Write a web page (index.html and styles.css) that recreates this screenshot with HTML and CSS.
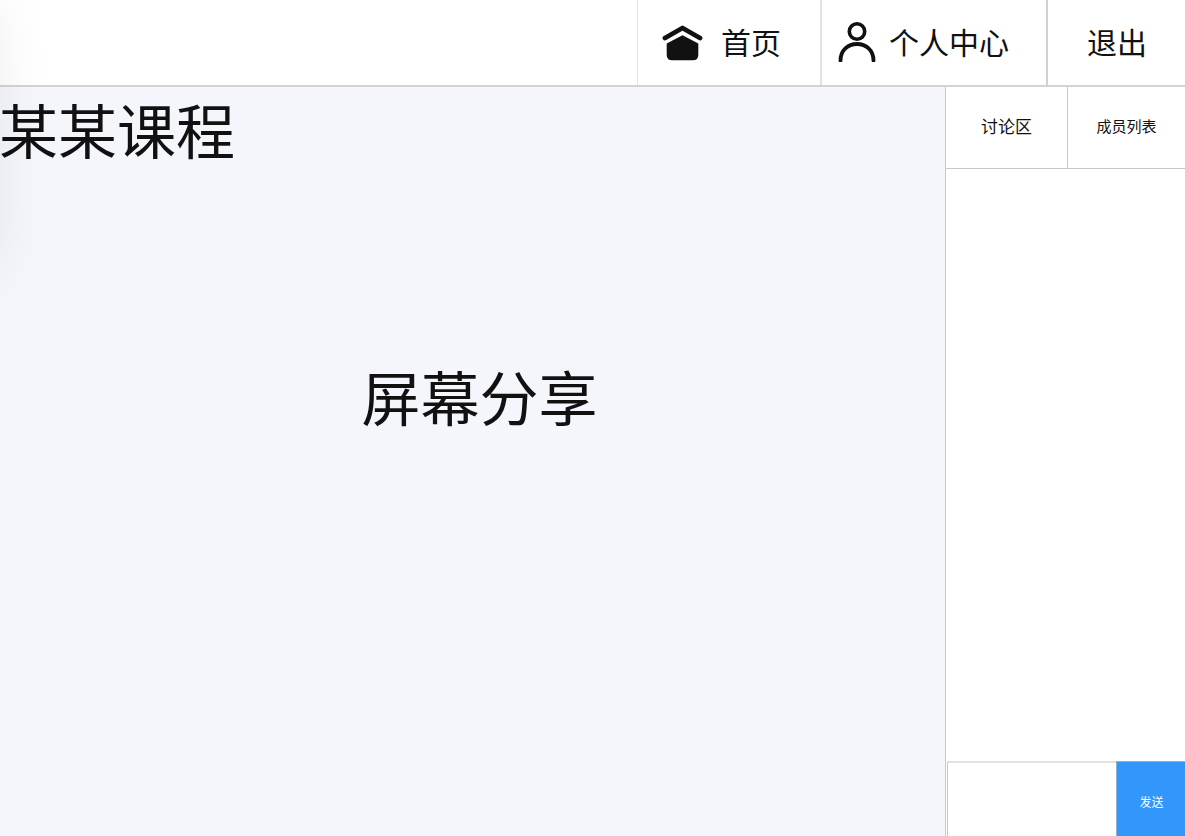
FILE: index.html
```html
<!DOCTYPE html>
<html lang="zh-CN">
<head>
<meta charset="utf-8">
<meta name="viewport" content="width=device-width, initial-scale=1">
<title>某某课程</title>
<link rel="stylesheet" href="styles.css">
</head>
<body>
<div class="page">
  <header class="topbar">
    <nav class="nav">
      <a class="nav-item nav-home" href="#home">
        <svg class="nav-icon" viewBox="0 -1 42 42" aria-hidden="true">
          <path d="M3 17 20.500 7 38 17" fill="none" stroke="#111" stroke-width="4.800" stroke-linecap="round" stroke-linejoin="round"/>
          <path d="M20.500 14.200 36.300 22.500v11.200q0 5.500-5.500 5.500h-20.600q-5.500 0-5.500-5.500V22.500Z" fill="#111"/>
        </svg>
        <span>首页</span>
      </a>
      <a class="nav-item nav-user" href="#profile">
        <svg class="nav-icon" viewBox="0 -1 42 42" aria-hidden="true">
          <circle cx="21" cy="10.500" r="7.700" fill="none" stroke="#111" stroke-width="3.600"/>
          <path d="M4.500 39.500c0-10.500 7.500-16.500 16.500-16.500s16.500 6 16.500 16.500" fill="none" stroke="#111" stroke-width="3.800" stroke-linecap="round"/>
        </svg>
        <span>个人中心</span>
      </a>
      <button class="nav-item nav-exit" type="button">退出</button>
    </nav>
  </header>
  <div class="content">
    <main class="stage">
      <h1 class="course">某某课程</h1>
      <p class="share">屏幕分享</p>
    </main>
    <aside class="panel">
      <div class="tabs">
        <button class="tab tab-talk" type="button">讨论区</button>
        <button class="tab tab-members" type="button">成员列表</button>
      </div>
      <div class="messages"></div>
      <form class="composer">
        <textarea class="message" aria-label="消息"></textarea>
        <button class="send" type="button">发送</button>
      </form>
    </aside>
  </div>
  <div class="edge-shadow"></div>
</div>
</body>
</html>
```
FILE: styles.css
```css
* {
  box-sizing: border-box;
}

body {
  margin: 0;
  color: #111;
  background: #fff;
  font-family: "Noto Sans CJK SC", sans-serif;
}

button,
textarea {
  margin: 0;
  color: inherit;
  font-family: inherit;
  border: 0;
  border-radius: 0;
  background: #fff;
}

.page {
  position: relative;
  display: flex;
  flex-direction: column;
  min-height: 100vh;
  overflow: hidden;
}

.topbar {
  display: flex;
  justify-content: flex-end;
  border-bottom: 2px solid #d3d3d3;
}

.nav {
  display: flex;
  min-height: 85px;
}

.nav-item {
  display: flex;
  align-items: center;
  color: #111;
  font-size: 30px;
  line-height: 44px;
  text-decoration: none;
  border-left: 2px solid #e2e2e2;
}

.nav-icon {
  width: 42px;
  height: 42px;
}

.nav-home {
  gap: 17px;
  padding: 0 39px 4px 24px;
  border-left-width: 1px;
}

.nav-user {
  gap: 11px;
  padding: 0 37px 4px 14px;
}

.nav-exit {
  padding: 0 38px 4px 39px;
  border-left-color: #d0d0d0;
}

.content {
  display: flex;
  flex: 1;
}

.stage {
  flex: 1;
  background: #f4f6fb;
}

.course,
.share {
  margin: 0;
  font-size: 59px;
  font-weight: 400;
  line-height: 84px;
}

.course {
  margin-left: -1px;
}

.share {
  padding-top: 183px;
  text-align: center;
  text-indent: 14px;
}

.panel {
  display: flex;
  flex-direction: column;
  width: 240px;
  border-left: 1px solid #c8c8c8;
}

.tabs {
  display: flex;
  height: 82px;
  border-bottom: 1px solid #c8c8c8;
}

.tab {
  padding: 0 0 4px;
}

.tab-talk {
  width: 121px;
  font-size: 17px;
}

.tab-members {
  flex: 1;
  font-size: 15px;
  border-left: 1px solid #c8c8c8;
}

.messages {
  flex: 1;
}

.composer {
  display: flex;
  height: 75px;
  padding-left: 1px;
}

.message {
  flex: 1;
  min-width: 0;
  padding: 8px;
  font-size: 15px;
  resize: none;
  border-top: 2px solid #e2e2e2;
  border-left: 1px solid #c8c8c8;
}

.send {
  width: 69px;
  padding: 4px 0 0 1px;
  color: #fff;
  font-size: 12px;
  background: #3296fa;
  border-top: 1px solid #8fb0d0;
  border-left: 1px solid #8fb0d0;
}

.edge-shadow {
  position: absolute;
  top: 0;
  left: -50px;
  width: 40px;
  height: 270px;
  box-shadow: 0 0 60px rgba(0, 0, 0, 0.1);
  pointer-events: none;
}
```
